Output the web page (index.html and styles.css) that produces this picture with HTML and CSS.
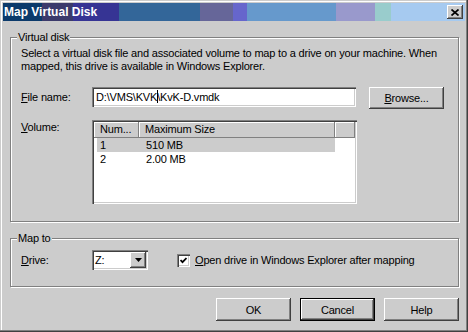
FILE: index.html
```html
<!DOCTYPE html>
<html lang="en">
<head>
    <meta charset="UTF-8">
    <title>Map Virtual Disk</title>
    <link rel="stylesheet" href="styles.css">
</head>
<body>
    <div class="window">
        <div class="titlebar">
            <span class="title">Map Virtual Disk</span>
            <span class="close-btn">
                <svg width="8" height="7" viewBox="0 0 8 7"><path d="M0.5 0.5 L7.5 6.5 M7.5 0.5 L0.5 6.5" stroke="#000" stroke-width="1.7" fill="none"/></svg>
            </span>
        </div>

        <div class="content">
            <fieldset class="group group-disk">
                <legend>Virtual disk</legend>
                <p class="intro">Select a virtual disk file and associated volume to map to a drive on your machine. When<br>mapped, this drive is available in Windows Explorer.</p>

                <div class="row row-file">
                    <label class="field-label"><u>F</u>ile name:</label>
                    <div class="textbox">D:\VMS\KVK<span class="caret"></span>\KvK-D.vmdk</div>
                    <button class="btn btn-browse"><u>B</u>rowse...</button>
                </div>

                <div class="row row-volume">
                    <label class="field-label"><u>V</u>olume:</label>
                    <div class="listview">
                        <div class="lv-header">
                            <span class="lv-col col-num">Num...</span>
                            <span class="lv-col col-size">Maximum Size</span>
                            <span class="lv-col col-fill"></span>
                        </div>
                        <div class="lv-row selected"><span class="cell-num">1</span><span class="cell-size">510 MB</span></div>
                        <div class="lv-row"><span class="cell-num">2</span><span class="cell-size">2.00 MB</span></div>
                    </div>
                </div>
            </fieldset>

            <fieldset class="group group-map">
                <legend>Map to</legend>
                <div class="row row-drive">
                    <label class="field-label"><u>D</u>rive:</label>
                    <div class="combo">
                        <span class="combo-text">Z:</span>
                        <span class="combo-btn">
                            <svg width="7" height="4" viewBox="0 0 7 4"><path d="M0 0 H7 L3.5 4 Z" fill="#000"/></svg>
                        </span>
                    </div>
                    <label class="check">
                        <span class="checkbox">
                            <svg width="7" height="7" viewBox="0 0 7 7"><polyline points="0.5,3 2.5,5.2 6.5,1" stroke="#000" stroke-width="1.8" fill="none"/></svg>
                        </span>
                        <span><u>O</u>pen drive in Windows Explorer after mapping</span>
                    </label>
                </div>
            </fieldset>

            <div class="buttons">
                <button class="btn">OK</button>
                <button class="btn default">Cancel</button>
                <button class="btn">Help</button>
            </div>
        </div>
    </div>
</body>
</html>
```

FILE: styles.css
```css
body {
    margin: 0;
    font-family: "Liberation Sans", Arial, sans-serif;
    font-size: 11px;
    letter-spacing: -0.18px;
    color: #000;
    background: #fff;
}
.window {
    width: 468px;
    height: 332px;
    box-sizing: border-box;
    padding: 3px;
    background: #cccccc;
    box-shadow: inset -1px -1px #404040, inset -2px -2px #808080, inset 1px 1px #cccccc, inset 2px 2px #fff;
    display: flex;
    flex-direction: column;
}
.titlebar {
    height: 18px;
    display: flex;
    align-items: center;
    background: linear-gradient(to right,
        #0b3a6b 0 39px, #3b3a6b 39px 70px, #363494 70px 116px,
        #336699 116px 197px, #666699 197px 230px, #6666cc 230px 244px,
        #6699cc 244px 333px, #9999cc 333px 372px, #99cccc 372px 388px,
        #a6caf0 388px);
}
.title {
    color: #fff;
    font-weight: bold;
    font-size: 12px;
    letter-spacing: 0;
    padding-left: 1px;
}
.close-btn {
    margin-left: auto;
    margin-right: 2px;
    width: 16px;
    height: 14px;
    box-sizing: border-box;
    background: #cccccc;
    box-shadow: inset -1px -1px #404040, inset 1px 1px #fff, inset -2px -2px #808080;
    display: flex;
    align-items: center;
    justify-content: center;
}
.close-btn svg {
    display: block;
}
.content {
    padding: 10px 6px 0 7px;
}
.group {
    margin: 0;
    padding: 3px 10px 17px 10px;
    border: 1px solid #808080;
    box-shadow: inset 1px 1px #fff, 1px 1px #fff;
    min-width: 0;
}
.group legend {
    padding: 0 1px;
    margin-left: -4px;
    line-height: 13px;
    background: #cccccc;
}
.group-map {
    margin-top: 10px;
    padding-top: 5px;
    padding-bottom: 16px;
}
.intro {
    margin: 0;
    line-height: 13px;
    white-space: nowrap;
}
.row {
    display: flex;
    align-items: flex-start;
}
.field-label {
    width: 71px;
    flex: none;
}
.row-file {
    margin-top: 14px;
}
.row-file .field-label {
    line-height: 20px;
}
.textbox {
    width: 264px;
    height: 20px;
    box-sizing: border-box;
    padding-left: 4px;
    line-height: 20px;
    background: #fff;
    box-shadow: inset 1px 1px #808080, inset 2px 2px #404040, inset -1px -1px #fff, inset -2px -2px #cccccc;
    white-space: nowrap;
}
.caret {
    display: inline-block;
    width: 1px;
    height: 13px;
    margin-right: -1px;
    background: #000;
    vertical-align: -2px;
}
.btn {
    width: 75px;
    height: 23px;
    box-sizing: border-box;
    padding: 0;
    border: 0;
    font: inherit;
    letter-spacing: inherit;
    color: #000;
    background: #cccccc;
    box-shadow: inset -1px -1px #404040, inset 1px 1px #fff, inset -2px -2px #808080;
}
.btn.default {
    border: 1px solid #000;
}
.btn-browse {
    height: 22px;
    margin-left: 13px;
}
.row-volume {
    margin-top: 11px;
}
.row-volume .field-label {
    padding-top: 1px;
}
.listview {
    width: 265px;
    height: 84px;
    box-sizing: border-box;
    padding: 2px;
    background: #fff;
    box-shadow: inset 1px 1px #808080, inset 2px 2px #404040, inset -1px -1px #fff, inset -2px -2px #cccccc;
}
.lv-header {
    display: flex;
    height: 16px;
    line-height: 15px;
}
.lv-col {
    box-sizing: border-box;
    padding-left: 6px;
    background: #cccccc;
    box-shadow: inset -1px -1px #808080, inset 1px 1px #fff;
    white-space: nowrap;
}
.col-num {
    width: 45px;
}
.col-size {
    width: 196px;
}
.col-fill {
    flex: 1;
}
.lv-row {
    display: flex;
    width: 238px;
    height: 14px;
    line-height: 14px;
    margin-left: 3px;
}
.lv-row:first-of-type {
    margin-top: 1px;
}
.lv-row.selected {
    background: #cccccc;
}
.cell-num {
    width: 42px;
    padding-left: 3px;
    box-sizing: border-box;
}
.cell-size {
    padding-left: 7px;
}
.row-drive {
    align-items: center;
}
.combo {
    width: 56px;
    height: 20px;
    box-sizing: border-box;
    padding: 2px;
    display: flex;
    background: #fff;
    box-shadow: inset 1px 1px #808080, inset 2px 2px #404040, inset -1px -1px #fff, inset -2px -2px #cccccc;
}
.combo-text {
    flex: 1;
    padding-left: 1px;
    line-height: 16px;
}
.combo-btn {
    width: 16px;
    height: 16px;
    box-sizing: border-box;
    background: #cccccc;
    box-shadow: inset -1px -1px #404040, inset 1px 1px #fff, inset -2px -2px #808080;
    display: flex;
    align-items: center;
    justify-content: center;
}
.combo-btn svg, .checkbox svg {
    display: block;
}
.check {
    display: flex;
    align-items: center;
    margin-left: 29px;
    gap: 5px;
}
.checkbox {
    width: 13px;
    height: 13px;
    box-sizing: border-box;
    background: #fff;
    box-shadow: inset 1px 1px #808080, inset 2px 2px #404040, inset -1px -1px #fff, inset -2px -2px #cccccc;
    display: flex;
    align-items: center;
    justify-content: center;
}
.buttons {
    display: flex;
    justify-content: flex-end;
    gap: 9px;
    margin-top: 11px;
}
```
